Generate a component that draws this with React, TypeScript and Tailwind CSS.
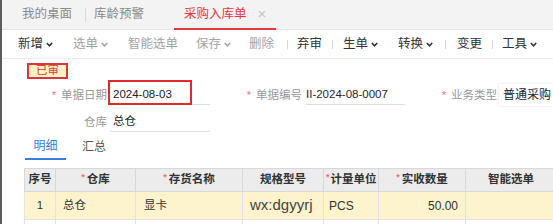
import React from "react";

// ============ Helpers ============

const Chevron: React.FC = () => (
  <svg width="7" height="5" viewBox="0 0 7 5" className="ml-[3px] mt-[1px] shrink-0">
    <polyline points="0.8,1 3.5,3.8 6.2,1" fill="none" stroke="currentColor" strokeWidth="1.6" />
  </svg>
);

const Sep: React.FC<{ className?: string }> = ({ className = "" }) => (
  <div className={`w-px h-[9px] shrink-0 bg-[#d9d9d9] ${className}`} />
);

const Star: React.FC = () => <span className="text-[#f07070] mr-[5px] text-[11px]">*</span>;

// ============ App ============

export default function App() {
  return (
    <div className="w-[553px] h-[224px] overflow-hidden bg-white border-l-2 border-[#5c5c5c] font-['Liberation_Sans','Noto_Sans_CJK_SC',sans-serif] text-[#333]">
      {/* tab bar */}
      <div className="h-[30px] bg-[#f3f3f3] border-b border-[#e3e3e3] flex items-stretch text-[12.5px] text-[#8a8a8a] whitespace-nowrap">
        <div className="ml-[20px] flex items-center">我的桌面</div>
        <div className="ml-[13px] flex items-center">
          <Sep className="h-[14px]" />
        </div>
        <div className="ml-[8px] flex items-center">库龄预警</div>
        <div className="ml-[30px] px-[10px] flex items-center border-b-2 border-[#e5383e] text-[#e5383e] mb-[-1px]">
          采购入库单
          <span className="ml-[11px] text-[#c4c4c4] text-[15px] font-light">×</span>
        </div>
      </div>

      {/* toolbar */}
      <div className="h-[29px] border-b border-[#ececec] flex items-center text-[12.5px] whitespace-nowrap">
        <div className="ml-[16px] w-[34px] shrink-0 flex items-center text-[#333]">新增<Chevron /></div>
        <div className="ml-[21px] w-[35px] shrink-0 flex items-center text-[#a3a3a3]">选单<Chevron /></div>
        <div className="ml-[20px] w-[49px] shrink-0 flex items-center text-[#a3a3a3]">智能选单</div>
        <div className="ml-[19px] w-[34px] shrink-0 flex items-center text-[#a3a3a3]">保存<Chevron /></div>
        <div className="ml-[19px] w-[26px] shrink-0 flex items-center text-[#a3a3a3]">删除</div>
        <Sep className="ml-[12px]" />
        <div className="ml-[9px] w-[25px] shrink-0 flex items-center">弃审</div>
        <Sep className="ml-[10px]" />
        <div className="ml-[10px] w-[34px] shrink-0 flex items-center">生单<Chevron /></div>
        <div className="ml-[21px] w-[35px] shrink-0 flex items-center">转换<Chevron /></div>
        <Sep className="ml-[12px]" />
        <div className="ml-[11px] w-[25px] shrink-0 flex items-center">变更</div>
        <Sep className="ml-[10px]" />
        <div className="ml-[9px] w-[35px] shrink-0 flex items-center">工具<Chevron /></div>
      </div>

      {/* status badge */}
      <div className="mt-[4px] ml-[25px] w-[41px] h-[16px] border-2 border-[#d9363e] bg-[#fdf1c6] text-[#e0393e] text-[11.5px] leading-none flex items-center justify-center">
        已审
      </div>

      {/* row 1 */}
      <div className="mt-[5px] flex items-end text-[11.5px] whitespace-nowrap">
        <div className="w-[105px] shrink-0 text-right text-[#999] leading-[20px]"><Star />单据日期</div>
        <div className="relative ml-[3px] w-[100px] shrink-0 h-[20px] border-b border-[#dedede] flex items-center pl-[3px] text-[#222]">
          2024-08-03
          <div className="absolute left-[-2px] top-[-5px] w-[84px] h-[25px] border-2 border-[#e02a2a]" />
        </div>
        <div className="w-[92px] shrink-0 text-right text-[#999] leading-[20px]"><Star />单据编号</div>
        <div className="ml-[4px] w-[99px] shrink-0 h-[20px] border-b border-[#dedede] flex items-center text-[#2a2233]">
          II-2024-08-0007
        </div>
        <div className="w-[92px] shrink-0 text-right text-[#999] leading-[20px]"><Star />业务类型</div>
        <div className="ml-[2px] flex-1 h-[22px] mb-[-1px] bg-white shadow-[0_0_2px_rgba(0,0,0,0.15)] flex items-center pl-[4px] text-[#222] text-[12px]">
          普通采购
        </div>
      </div>

      {/* row 2 */}
      <div className="mt-[7px] flex items-end text-[11.5px]">
        <div className="w-[105px] text-right text-[#999] leading-[20px]">仓库</div>
        <div className="ml-[3px] w-[100px] h-[20px] border-b border-[#dedede] flex items-center pl-[3px] text-[#222]">
          总仓
        </div>
      </div>

      {/* detail tabs */}
      <div className="mt-[1px] ml-[23px] flex text-[12px]">
        <div className="w-[41px] h-[27px] border-b-2 border-[#3b7ddd] text-[#3b7ddd] flex items-center justify-center">明细</div>
        <div className="ml-[16px] h-[27px] flex items-center text-[#555]">汇总</div>
      </div>

      {/* table */}
      <table className="mt-[8px] ml-[22px] table-fixed border-collapse text-[11.5px] w-[560px]">
        <colgroup>
          <col className="w-[31px]" />
          <col className="w-[80px]" />
          <col className="w-[107px]" />
          <col className="w-[81px]" />
          <col className="w-[55px]" />
          <col className="w-[87px]" />
          <col className="w-[119px]" />
        </colgroup>
        <thead>
          <tr className="h-[23px] bg-[#ececec] font-bold text-[#333]">
            <th className="border border-[#d8d8d8] font-bold">序号</th>
            <th className="border border-[#d8d8d8] font-bold"><span className="text-[#f07070] text-[9px] align-top mr-[2px]">*</span>仓库</th>
            <th className="border border-[#d8d8d8] font-bold"><span className="text-[#f07070] text-[9px] align-top mr-[2px]">*</span>存货名称</th>
            <th className="border border-[#d8d8d8] font-bold">规格型号</th>
            <th className="border border-[#d8d8d8] font-bold text-left pl-[2px] whitespace-nowrap"><span className="text-[#f07070] text-[9px] align-top mr-[1px]">*</span>计量单位</th>
            <th className="border border-[#d8d8d8] font-bold"><span className="text-[#f07070] text-[9px] align-top mr-[2px]">*</span>实收数量</th>
            <th className="border border-[#d8d8d8] font-bold text-left pl-[22px]">智能选单</th>
          </tr>
        </thead>
        <tbody>
          <tr className="h-[28px] bg-[#fdf3cc] text-[#333]">
            <td className="border border-[#e2e2e2] text-center">1</td>
            <td className="border border-[#e2e2e2] pl-[7px]">总仓</td>
            <td className="border border-[#e2e2e2] pl-[8px]">显卡</td>
            <td className="border border-[#e2e2e2] pl-[7px] text-[15px] text-[#444]">wx:dgyyrj</td>
            <td className="border border-[#e2e2e2] pl-[5px] text-[12px]">PCS</td>
            <td className="border border-[#e2e2e2] pr-[7px] text-right text-[12px]">50.00</td>
            <td className="border border-[#e2e2e2]"></td>
          </tr>
          <tr className="h-[28px] bg-white">
            <td className="border border-[#e2e2e2]"></td>
            <td className="border border-[#e2e2e2]"></td>
            <td className="border border-[#e2e2e2]"></td>
            <td className="border border-[#e2e2e2]"></td>
            <td className="border border-[#e2e2e2]"></td>
            <td className="border border-[#e2e2e2]"></td>
            <td className="border border-[#e2e2e2]"></td>
          </tr>
        </tbody>
      </table>
    </div>
  );
}
